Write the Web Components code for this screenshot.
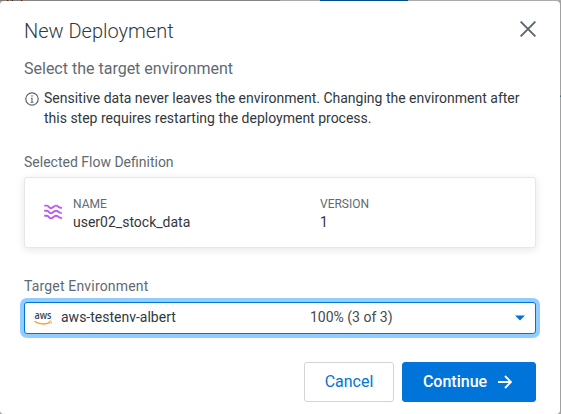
<!DOCTYPE html>
<html lang="en">
<head>
<meta charset="utf-8">
<title>New Deployment</title>
<style>
html,body{margin:0;height:100%;overflow:hidden}
body{font-family:Roboto,"Liberation Sans",sans-serif;background:#8c8c8c;color:#30383e}
</style>
</head>
<body>
<deploy-page></deploy-page>
<script>
const define = (name, html) => customElements.define(name, class extends HTMLElement {
  constructor() {
    super();
    this.attachShadow({mode: 'open'}).innerHTML = html;
  }
});

define('ui-icon-close', `<style>:host{display:block;width:16px;height:16px}svg{display:block}</style>
<svg width="16" height="16" viewBox="0 0 16 16"><path d="M.6 .6 15.400 15.400M15.400 .6 .6 15.400" stroke="#5a656d" stroke-width="1.900" fill="none"/></svg>`);

define('ui-icon-info', `<style>:host{display:block;width:14px;height:14px}svg{display:block}</style>
<svg width="14" height="14" viewBox="0 0 14 14"><circle cx="7" cy="7" r="6.2" fill="none" stroke="#5a656d" stroke-width="1.2"/><path d="M7 3.2v1.5M5.8 6.3H7v4M5.6 10.2h2.8" fill="none" stroke="#5a656d" stroke-width="1.1"/></svg>`);

define('ui-icon-flow', `<style>:host{display:block;width:18px;height:16px}svg{display:block}</style>
<svg width="18" height="16" viewBox="0 0 18 16"><g fill="none" stroke="#bd58f5" stroke-width="1.900" stroke-linecap="round" stroke-linejoin="round"><path d="M1 1.600H3C4.900 1.600 4.900 4.200 6.900 4.200S9.700 1.600 12 1.600 14.500 3.800 17.100 3.800"/><path d="M1 6.700H3C4.900 6.700 4.900 9.300 6.900 9.300S9.700 6.700 12 6.700 14.500 8.900 17.100 8.900"/><path d="M1 11.800H3C4.900 11.800 4.900 14.400 6.900 14.400S9.700 11.800 12 11.800 14.500 14 17.100 14"/></g></svg>`);

define('ui-logo-aws', `<style>:host{display:block;width:18px;height:14px}svg{display:block;overflow:visible}</style>
<svg width="18" height="14" viewBox="0 0 18 14"><text x="0.500" y="7.300" textLength="17" lengthAdjust="spacingAndGlyphs" font-family="Open Sans, sans-serif" font-weight="600" font-size="10.500" fill="#3b4453">aws</text><path d="M.5 9.300C5 12.500 11.500 12.700 16 10.300" fill="none" stroke="#ff9f1c" stroke-width="1.400"/><path d="M14.700 9.300C16.900 8.800 18.100 8.900 17 11.700" fill="none" stroke="#ff9f1c" stroke-width="1"/></svg>`);

define('ui-field', `<style>:host{display:flex;flex-direction:column}
.label{font-size:14px;line-height:20px;letter-spacing:var(--label-tracking,0);color:#5f6a72;height:25px}</style>
<div class="label"><slot name="label"></slot></div><slot></slot>`);

define('ui-meta', `<style>:host{display:block}
.k{font-size:12px;line-height:18px;color:#5f6a72}.v{font-size:14px;line-height:18px}</style>
<div class="k"><slot name="key"></slot></div><div class="v"><slot></slot></div>`);

define('flow-card', `<style>:host{display:grid;grid-template-columns:29px 247px 1fr;box-sizing:border-box;height:71px;padding:17px 18px 0 19px;border:1px solid #e7e7e7;border-radius:3px;background:#fff;box-shadow:0 2px 8px rgba(0,0,0,.1)}
ui-icon-flow{margin-top:9px}</style>
<ui-icon-flow></ui-icon-flow><slot></slot>`);

define('env-select', `<style>:host{display:grid;grid-template-columns:27px 249px 1fr 10px;align-items:center;box-sizing:border-box;height:32px;padding:0 10px 2px 9px;border:1px solid #0074d9;border-radius:3px;box-shadow:0 0 0 4px #91ceff;font-size:14px;line-height:20px;background:#fff}
.arrow{display:block;margin-top:2px}ui-logo-aws{margin-top:3px}
.usage{color:#484848}</style>
<ui-logo-aws></ui-logo-aws><span><slot></slot></span><span class="usage"><slot name="usage"></slot></span>
<svg class="arrow" width="10" height="6" viewBox="0 0 10 6"><path d="M0 .5H10L5 5.500z" fill="#0074d9"/></svg>`);

define('ui-button', `<style>:host{display:flex;align-items:center;justify-content:center;box-sizing:border-box;height:40px;width:90px;border:1px solid #d2d4d6;border-radius:3px;color:#0074d9;font-size:16px;line-height:24px;background:#fff}
:host([primary]){width:134px;background:#0074d9;border-color:#0074d9;color:#fff;font-weight:500;gap:11px;padding-right:3px}
svg{display:none}:host([primary]) svg{display:block}</style>
<span><slot></slot></span><svg width="14" height="14" viewBox="0 0 14 14"><path d="M0 7H12.800M7 1 13 7 7 13" fill="none" stroke="#fff" stroke-width="1.900"/></svg>`);

define('deploy-dialog', `<style>:host{display:flex;flex-direction:column;box-sizing:border-box;width:560px;height:413px;border-radius:4px;background:#fff;padding:18px 24px 12px}
header{display:flex;justify-content:space-between;height:40px}
h1{margin:0;font-size:20px;line-height:24px;font-weight:300;letter-spacing:0;color:#2f3a42}
ui-icon-close{margin-top:2px}
h2{margin:0;font-size:16px;line-height:20px;font-weight:400;color:#5f6a72;height:29px}
.note{display:flex;gap:5px;margin-left:1px;font-size:14px;line-height:20px;height:64px;white-space:nowrap}
.note p{margin:0}ui-icon-info{margin-top:4px}
.card{height:124px}.env{--label-tracking:.17px}.env env-select{margin-top:1px}footer{display:flex;justify-content:flex-end;gap:8px;margin-top:28px}</style>
<header><h1>New Deployment</h1><ui-icon-close></ui-icon-close></header>
<h2>Select the target environment</h2>
<div class="note"><ui-icon-info></ui-icon-info><p>Sensitive data never leaves the environment. Changing the environment after<br>this step requires restarting the deployment process.</p></div>
<ui-field class="card"><span slot="label">Selected Flow Definition</span>
<flow-card><ui-meta><span slot="key">NAME</span>user02_stock_data</ui-meta><ui-meta><span slot="key">VERSION</span>1</ui-meta></flow-card></ui-field>
<ui-field class="env"><span slot="label">Target Environment</span>
<env-select>aws-testenv-albert<span slot="usage">100% (3 of 3)</span></env-select></ui-field>
<footer><ui-button>Cancel</ui-button><ui-button primary>Continue</ui-button></footer>`);

define('deploy-page', `<style>:host{display:block;box-sizing:border-box;width:561px;height:414px;padding-top:1px;
background:linear-gradient(#e87722,#0074a9) 560px 95px/1px 2px no-repeat,linear-gradient(90deg,#807c78 0 7px,#203a66 7px 8px,#a45a3a 8px 9px,#807c78 9px 11px,#a45a3a 11px 12px,#25262a 12px 13px,#807c78 13px 21px,#25304c 21px 22px,#a45a3a 22px 23px,#858585 23px 280px,#aaa 280px 320px,#004c8c 320px 408px,#aaa 408px) 0 0/561px 1px no-repeat,#a1a1a1}</style>
<deploy-dialog></deploy-dialog>`);
</script>
</body>
</html>
